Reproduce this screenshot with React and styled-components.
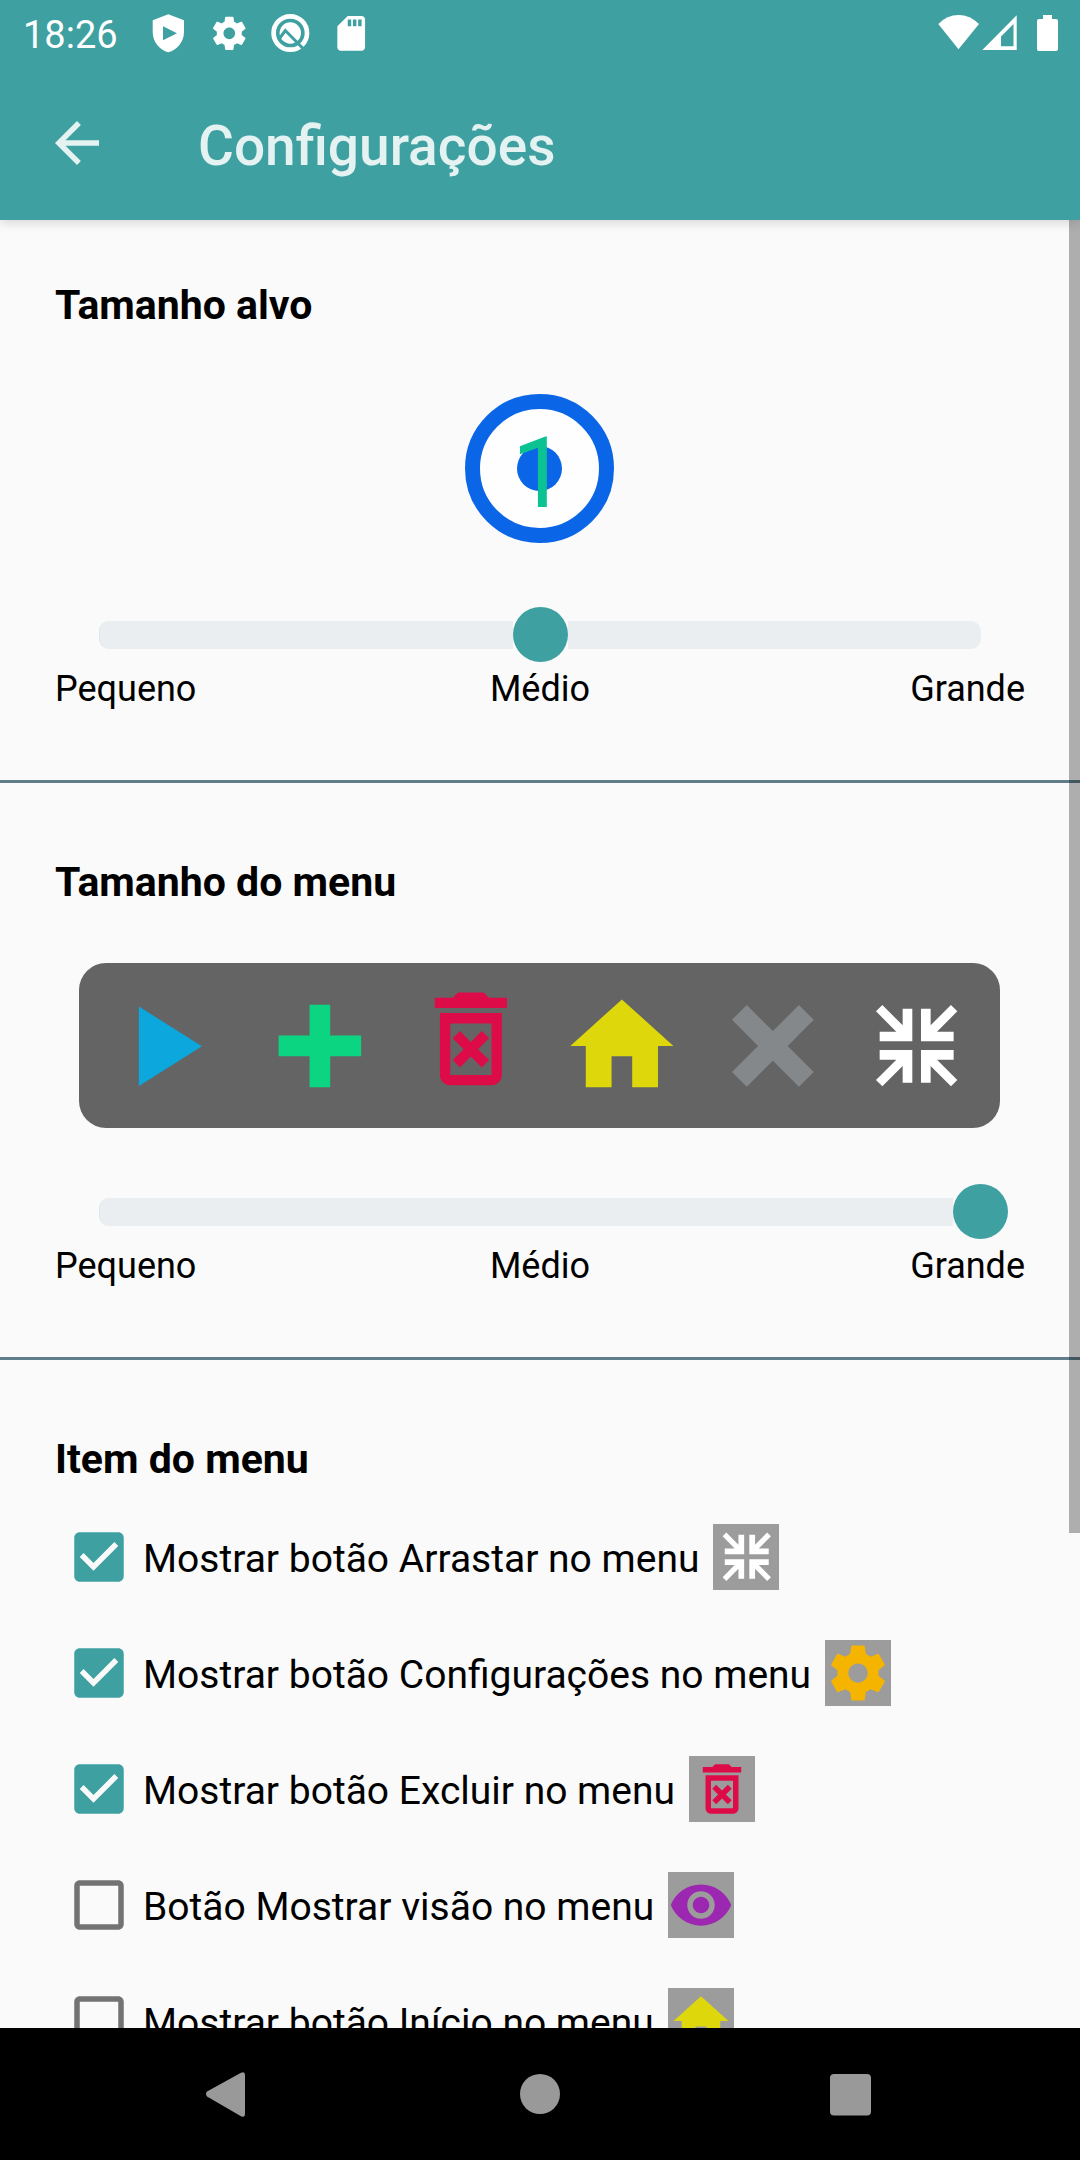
import React from 'react';
import styled, { createGlobalStyle } from 'styled-components';

const GlobalStyle = createGlobalStyle`
  * { box-sizing: border-box; }
  body { margin: 0; background: #fafafa; }
`;

const Screen = styled.div`
  width: 1080px;
  height: 2160px;
  display: flex;
  flex-direction: column;
  overflow: hidden;
  background: #fafafa;
  color: #000;
  font-family: Roboto, 'Liberation Sans', sans-serif;
`;

const Header = styled.header`
  position: relative;
  z-index: 1;
  flex: none;
  height: 220px;
  display: flex;
  flex-direction: column;
  background: #3fa0a1;
  box-shadow: 0 3px 10px rgba(0, 0, 0, 0.14);
`;

const StatusBar = styled.div`
  height: 66px;
  padding: 0 22px 0 23px;
  display: flex;
  justify-content: space-between;
  color: #fff;
`;

const StatusGroup = styled.div`
  display: flex;
  align-items: center;
`;

const Clock = styled.span`
  width: 125px;
  font-size: 38px;
  line-height: 66px;
  padding-top: 3px;
`;

const StatusIcon = styled.svg`
  display: block;
  width: ${(p) => p.$w}px;
  height: 66px;
  fill: currentColor;
`;

const Toolbar = styled.div`
  height: 154px;
  display: flex;
  align-items: center;
  color: #e4f2f2;
`;

const BackIcon = styled.svg`
  width: 66px;
  height: 66px;
  margin: 0 88px 0 44px;
  fill: currentColor;
`;

const Title = styled.h1`
  margin: 6px 0 0;
  font-size: 55px;
  line-height: 64px;
  font-weight: 500;
`;

const Content = styled.main`
  position: relative;
  height: 1808px;
  overflow: hidden;
`;

const ScrollThumb = styled.div`
  position: absolute;
  top: 0;
  right: 0;
  width: 11px;
  height: 1313px;
  background: rgba(0, 0, 0, 0.3);
`;

const Section = styled.section`
  height: ${(p) => p.$h}px;
  padding-top: ${(p) => p.$top}px;
  border-bottom: 3px solid #607d8b;
  display: flex;
  flex-direction: column;
`;

const Heading = styled.h2`
  margin: 0 0 0 55px;
  height: 56px;
  font-size: 41px;
  line-height: 56px;
  font-weight: 700;
`;

const Preview = styled.div`
  height: 271px;
  margin: 0 1px 3px 0;
  display: flex;
  justify-content: center;
  align-items: center;
`;

const TargetRing = styled.div`
  width: 149px;
  height: 149px;
  border: 15px solid #0b66e7;
  border-radius: 50%;
  background: #fefefe;
  display: grid;
  grid-template-rows: 119px;
  place-items: center;
`;

const TargetDot = styled.div`
  grid-area: 1 / 1;
  width: 45px;
  height: 45px;
  border-radius: 50%;
  background: #0b66e7;
`;

const TargetNumber = styled.span`
  grid-area: 1 / 1;
  font-size: 98.5px;
  line-height: 119px;
  color: #0bc392;
  padding-top: 9px;
`;

const MenuPanel = styled.div`
  width: 921px;
  height: 165px;
  padding-left: 14px;
  display: flex;
  border-radius: 27px;
  background: #646464;
`;

const MenuCell = styled.div`
  width: 151px;
  height: 165px;
  display: flex;
  align-items: center;
  justify-content: center;
  padding: ${(p) => p.$pad || '0'};
`;

const Glyph = styled.svg`
  display: block;
  flex: none;
  width: ${(p) => p.$s}px;
  height: ${(p) => p.$s}px;
  fill: ${(p) => p.$c};
  stroke: none;
`;

const Slider = styled.div`
  height: 55px;
  margin: 0 99px;
  display: grid;
  align-items: center;
`;

const Track = styled.div`
  grid-area: 1 / 1;
  height: 28px;
  border-radius: 10px;
  background: #eaeef1;
  border-left: 1px solid #dbe8e9;
`;

const ThumbSlot = styled.div`
  grid-area: 1 / 1;
  justify-self: ${(p) => p.$at};
  width: 55px;
  height: 55px;
  margin-right: ${(p) => (p.$at === 'end' ? -27 : 0)}px;
  background: #fafafa;
`;

const Thumb = styled.div`
  width: 55px;
  height: 55px;
  border-radius: 50%;
  background: #3fa0a1;
`;

const Labels = styled.div`
  margin: 6px 55px 0;
  height: 42px;
  display: grid;
  grid-template-columns: 1fr 1fr 1fr;
  font-size: 36px;
  line-height: 42px;
  span:nth-child(2) { text-align: center; }
  span:nth-child(3) { text-align: right; }
`;

const OptionList = styled.ul`
  list-style: none;
  margin: 12px 0 0;
  padding: 0;
`;

const Option = styled.li`
  height: 116px;
  padding-left: 66px;
  display: flex;
  align-items: center;
`;

const OptionLabel = styled.span`
  margin: 4px 14px 0 11px;
  font-size: 39px;
  line-height: 46px;
  white-space: nowrap;
`;

const IconTile = styled.div`
  width: 66px;
  height: 66px;
  display: flex;
  align-items: center;
  justify-content: center;
  background: #9c9c9c;
`;

const NavBar = styled.nav`
  height: 132px;
  flex: none;
  display: flex;
  justify-content: center;
  background: #000;
`;

const NavIcon = styled.svg`
  width: 311px;
  height: 132px;
  fill: #999;
`;

const GEAR =
  'M19.43 12.98c.04-.32.07-.64.07-.98s-.03-.66-.07-.98l2.11-1.65c.19-.15.24-.42.12-.64l-2-3.46c-.12-.22-.39-.3-.61-.22l-2.49 1c-.52-.4-1.08-.73-1.69-.98l-.38-2.65C14.46 2.18 14.25 2 14 2h-4c-.25 0-.46.18-.49.42l-.38 2.65c-.61.25-1.17.59-1.69.98l-2.49-1c-.23-.09-.49 0-.61.22l-2 3.46c-.13.22-.07.49.12.64l2.11 1.65c-.04.32-.07.65-.07.98s.03.66.07.98l-2.11 1.65c-.19.15-.24.42-.12.64l2 3.46c.12.22.39.3.61.22l2.49-1c.52.4 1.08.73 1.69.98l.38 2.65c.03.24.24.42.49.42h4c.25 0 .46-.18.49-.42l.38-2.65c.61-.25 1.17-.59 1.69-.98l2.49 1c.23.09.49 0 .61-.22l2-3.46c.12-.22.07-.49-.12-.64l-2.11-1.65zM12 15.5c-1.93 0-3.5-1.57-3.5-3.5s1.57-3.5 3.5-3.5 3.5 1.57 3.5 3.5-1.57 3.5-3.5 3.5z';

const Collapse = ({ size }) => (
  <Glyph $s={size} $c="#fff" viewBox="-125 -125 250 250">
    {[[1, 1], [-1, 1], [1, -1], [-1, -1]].map(([x, y]) => (
      <g key={`${x}${y}`} transform={`scale(${x} ${y})`}>
        <path d="M13 13H111V42H61L122 103L103 122L42 61V111H13Z" />
      </g>
    ))}
  </Glyph>
);

const Trash = ({ size }) => (
  <Glyph $s={size} $c="#de0b49" viewBox="0 0 24 24">
    <path d="M5 4h3.5l1-1h5l1 1H19v2H5z" />
    <path
      fillRule="evenodd"
      d="M6 7h12v12c0 1.1-.9 2-2 2H8c-1.1 0-2-.9-2-2zM8 9v10h8V9z"
    />
    <path d="M8.46 11.88l1.41-1.41L12 12.59l2.12-2.12 1.41 1.41L13.41 14l2.12 2.12-1.41 1.41L12 15.41l-2.12 2.12-1.41-1.41L10.59 14z" />
  </Glyph>
);

const Home = ({ size }) => (
  <Glyph $s={size} $c="#ddd70b" viewBox="0 0 24 24">
    <path d="M10 20v-6h4v6h5v-8h3L12 3 2 12h3v8z" />
  </Glyph>
);

const Gear = () => (
  <Glyph $s={66} $c="#f4b400" viewBox="0 0 24 24">
    <path d={GEAR} />
  </Glyph>
);

const Eye = () => (
  <Glyph $s={66} $c="#9c27b0" viewBox="0 0 24 24">
    <path d="M12 4.5C7 4.5 2.73 7.61 1 12c1.73 4.39 6 7.5 11 7.5s9.27-3.11 11-7.5c-1.73-4.39-6-7.5-11-7.5zM12 17c-2.76 0-5-2.24-5-5s2.24-5 5-5 5 2.24 5 5-2.24 5-5 5zm0-8c-1.66 0-3 1.34-3 3s1.34 3 3 3 3-1.34 3-3-1.34-3-3-3z" />
  </Glyph>
);

const Checkbox = ({ checked }) => (
  <Glyph $s={66} $c={checked ? '#3fa0a1' : '#737373'} viewBox="0 0 24 24">
    {checked ? (
      <path d="M19 3H5c-1.11 0-2 .9-2 2v14c0 1.1.89 2 2 2h14c1.11 0 2-.9 2-2V5c0-1.1-.89-2-2-2zm-9 14l-5-5 1.41-1.41L10 14.17l7.59-7.59L19 8l-9 9z" />
    ) : (
      <path d="M19 5v14H5V5h14m0-2H5c-1.1 0-2 .9-2 2v14c0 1.1.9 2 2 2h14c1.1 0 2-.9 2-2V5c0-1.1-.9-2-2-2z" />
    )}
  </Glyph>
);

const SizeSlider = ({ at }) => (
  <>
    <Slider>
      <Track />
      <ThumbSlot $at={at}>
        <Thumb />
      </ThumbSlot>
    </Slider>
    <Labels>
      <span>Pequeno</span>
      <span>Médio</span>
      <span>Grande</span>
    </Labels>
  </>
);

const options = [
  { label: 'Mostrar botão Arrastar no menu', checked: true, icon: <Collapse size={49.5} /> },
  { label: 'Mostrar botão Configurações no menu', checked: true, icon: <Gear /> },
  { label: 'Mostrar botão Excluir no menu', checked: true, icon: <Trash size={66} /> },
  { label: 'Botão Mostrar visão no menu', checked: false, icon: <Eye /> },
  { label: 'Mostrar botão Início no menu', checked: false, icon: <Home size={66} /> },
];

export default function App() {
  return (
    <Screen>
      <GlobalStyle />
      <Header>
        <StatusBar>
          <StatusGroup>
            <Clock>18:26</Clock>
            <StatusIcon $w={61} viewBox="148 0 61 66">
              <path
                fillRule="evenodd"
                d="M168.3 14.3L184 20.3V32C184 42 177 50 168.3 52.3C159.6 50 152.7 42 152.7 32V20.3ZM163 26.3V40.3L177 33.3Z"
              />
            </StatusIcon>
            <StatusIcon $w={61} viewBox="209 0 61 66">
              <path transform="translate(209.3 13.3) scale(1.667)" d={GEAR} />
            </StatusIcon>
            <StatusIcon $w={62} viewBox="270 0 62 66">
              <circle cx="290.3" cy="33" r="16.7" fill="none" stroke="#fff" strokeWidth="4.7" />
              <circle cx="290.3" cy="33" r="10.7" />
              <path
                d="M279.5 38.5L285.3 30.5L306 51.5"
                fill="none"
                stroke="#3fa0a1"
                strokeWidth="3"
              />
            </StatusIcon>
            <StatusIcon $w={42} viewBox="332 0 42 66">
              <path
                transform="translate(330.4 12.5) scale(1.733)"
                d="M18 2h-8L4.02 8 4 20c0 1.1.9 2 2 2h12c1.1 0 2-.9 2-2V4c0-1.1-.9-2-2-2zm-6 6h-2V4h2v4zm3 0h-2V4h2v4zm3 0h-2V4h2v4z"
              />
            </StatusIcon>
          </StatusGroup>
          <StatusGroup>
            <StatusIcon $w={125} viewBox="933 0 125 66">
              <path d="M958.5 49.3L938.3 24Q947 15 958.5 15T979 24Z" />
              <path fillRule="evenodd" d="M982.3 50L1016.7 15.3V50ZM1001 46.3H1013.5V24L1001 36.5Z" />
              <path d="M1043 15H1052V19H1056Q1058 19 1058 21V49Q1058 51 1056 51H1039Q1037 51 1037 49V21Q1037 19 1039 19H1043Z" />
            </StatusIcon>
          </StatusGroup>
        </StatusBar>
        <Toolbar>
          <BackIcon viewBox="0 0 24 24">
            <path d="M20 11H7.83l5.59-5.59L12 4l-8 8 8 8 1.41-1.41L7.83 13H20v-2z" />
          </BackIcon>
          <Title>Configurações</Title>
        </Toolbar>
      </Header>
      <Content>
        <Section $h={563} $top={57}>
          <Heading>Tamanho alvo</Heading>
          <Preview>
            <TargetRing>
              <TargetDot />
              <TargetNumber>1</TargetNumber>
            </TargetRing>
          </Preview>
          <SizeSlider at="center" />
        </Section>
        <Section $h={577} $top={71}>
          <Heading>Tamanho do menu</Heading>
          <Preview>
            <MenuPanel>
              <MenuCell>
                <Glyph $s={123.75} $c="#0ba7dd" viewBox="0 0 123.75 123.75">
                  <path d="M31.9 22.5L94.9 62.3L31.9 102Z" />
                </Glyph>
              </MenuCell>
              <MenuCell>
                <Glyph $s={123.75} $c="#0bd580" viewBox="0 0 24 24">
                  <path d="M10 4h4v6h6v4h-6v6h-4v-6H4v-4h6z" />
                </Glyph>
              </MenuCell>
              <MenuCell $pad="0 0 14px">
                <Trash size={123.75} />
              </MenuCell>
              <MenuCell>
                <Home size={123.75} />
              </MenuCell>
              <MenuCell>
                <Glyph $s={123.75} $c="#84888b" viewBox="-12 -12 24 24">
                  <path
                    transform="rotate(45)"
                    d="M-2.03 -9.18h4.06v7.15h7.15v4.06h-7.15v7.15h-4.06v-7.15h-7.15v-4.06h7.15z"
                  />
                </Glyph>
              </MenuCell>
              <MenuCell $pad="0 13px 0 0">
                <Collapse size={83.3} />
              </MenuCell>
            </MenuPanel>
          </Preview>
          <SizeSlider at="end" />
        </Section>
        <Section $h={760} $top={71}>
          <Heading>Item do menu</Heading>
          <OptionList>
            {options.map((o) => (
              <Option key={o.label}>
                <Checkbox checked={o.checked} />
                <OptionLabel>{o.label}</OptionLabel>
                <IconTile>{o.icon}</IconTile>
              </Option>
            ))}
          </OptionList>
        </Section>
        <ScrollThumb />
      </Content>
      <NavBar>
        <NavIcon viewBox="74 0 311 132">
          <path d="M207 63.5L241 44.8Q245 43 245 47V86Q245 90 241 88.2L207 68.5Q205 66 207 63.5Z" />
        </NavIcon>
        <NavIcon viewBox="385 0 311 132">
          <circle cx="540" cy="66" r="20" />
        </NavIcon>
        <NavIcon viewBox="696 0 311 132">
          <rect x="830" y="46" width="41" height="41.5" rx="4" />
        </NavIcon>
      </NavBar>
    </Screen>
  );
}
